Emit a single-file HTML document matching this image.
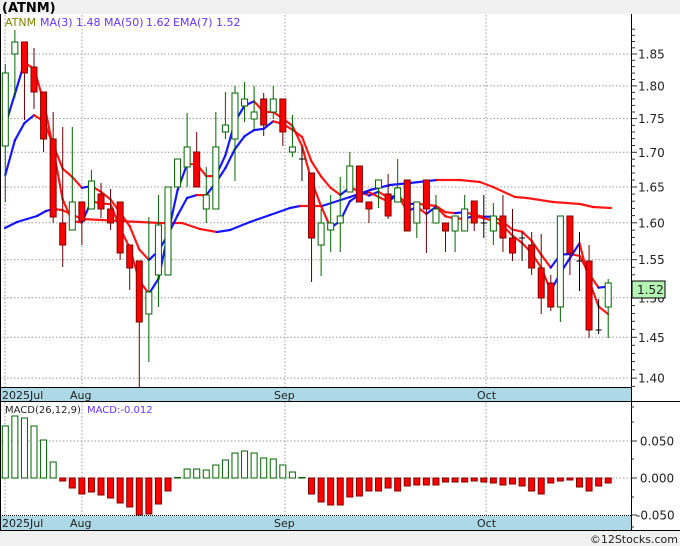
<!DOCTYPE html>
<html><head><meta charset="utf-8"><style>
html,body{margin:0;padding:0;background:#f0f0f0;width:680px;height:546px;overflow:hidden}
svg{display:block}
text{font-family:"DejaVu Sans","Liberation Sans",sans-serif}
</style></head><body>
<svg id="s" width="680" height="546" xmlns="http://www.w3.org/2000/svg">
<rect x="0" y="0" width="680" height="546" fill="#f0f0f0"/>
<text x="2" y="12" font-size="13" font-weight="bold" fill="#000">(ATNM)</text>
<rect x="0" y="14" width="680" height="516" fill="#fff"/>
<g id="g"></g>
</svg>
<script>
var g=document.getElementById('g'),o='';
function Y(p){return 769.2-1162.5*Math.log(p);}
function P(y){return Math.exp((769.2-y)/1162.5);}
var X0=5.3,DX=9.57;function X(i){return X0+DX*i;}
// grid
var lv=[1.85,1.80,1.75,1.70,1.65,1.60,1.55,1.50,1.45,1.40];
lv.forEach(function(p){var y=Y(p).toFixed(1);o+='<line x1="0" x2="631" y1="'+y+'" y2="'+y+'" stroke="#999" stroke-dasharray="1.5,2"/>';});
[5,82,285,486].forEach(function(x){o+='<line x1="'+x+'" x2="'+x+'" y1="15" y2="388" stroke="#999" stroke-dasharray="1.5,2"/><line x1="'+x+'" x2="'+x+'" y1="402" y2="515" stroke="#999" stroke-dasharray="1.5,2"/>';});
[441,478].forEach(function(y){o+='<line x1="0" x2="631" y1="'+y+'" y2="'+y+'" stroke="#999" stroke-dasharray="1.5,2"/>';});
// MA50
var m50=[[5,228],[17,222],[27,219],[37,216],[46,211],[53,209],[62,210],[82,219],[120,221],[160,223],[182,223],[200,229],[217,232],[230,230],[250,222],[270,215],[290,208],[300,206],[322,206],[350,197],[370,190],[390,185],[410,183],[437,180],[460,180],[480,182],[493,187],[515,197],[527,198],[553,202],[580,204],[593,207],[611,208]];
function seg(pts){for(var i=1;i<pts.length;i++){var a=pts[i-1],b=pts[i];var c=b[1]<a[1]-0.01?'#0000ff':'#ff0000';o+='<line x1="'+a[0]+'" y1="'+a[1]+'" x2="'+b[0]+'" y2="'+b[1]+'" stroke="'+c+'" stroke-width="2.2" stroke-linecap="round" opacity="0.9"/>';}}
seg(m50);
// candles: [open,close,high,low] in pixel y
var C=[
['g',146,73,64,202],['g',54,42,30,98],['r',42,73,42,120],['r',67,92,48,109],['r',92,139,92,152],['r',139,217,112,223],['r',223,245,127,267],['g',230,202,127,230],['r',202,221,202,245],['g',209,181,170,209],['r',194,209,183,218],['r',209,223,189,230],['r',202,253,202,260],['r',245,268,245,290],['r',261,322,261,387],['g',314,292,217,362],
['g',275,225,195,307],['g',275,187,187,275],['g',187,159,159,187],['g',167,147,113,187],['r',152,187,132,187],['g',209,195,167,223],['g',209,147,112,209],['g',132,125,92,139],['g',139,93,86,181],['g',106,99,82,122],['g',119,112,86,129],['r',99,125,93,136],['g',112,99,86,119],['r',99,132,99,146],['g',152,147,115,157],['d',159,159,147,181],
['r',173,238,173,282],['g',245,223,209,276],['g',230,223,195,252],['g',223,216,177,252],['g',192,166,152,192],['r',166,202,166,202],['r',202,209,202,223],['g',188,180,180,208],['r',194,216,174,219],['g',202,188,159,202],['r',180,231,180,231],['g',223,202,202,238],['r',180,209,180,253],['g',223,209,195,223],['r',223,231,223,252],['g',231,216,216,252],
['g',231,209,195,231],['r',201,223,201,231],['d',223,223,195,238],['g',231,216,203,245],['r',216,238,195,252],['r',238,253,209,261],['d',238,238,232,261],['r',245,268,232,275],['r',268,298,234,314],['r',283,307,275,311],['g',307,216,216,322],['r',216,253,216,275],['d',261,261,232,291],['r',261,330,245,338],['d',330,330,299,334],['g',307,283,279,338]];
var closes=C.map(function(c){return P(c[2]);});
// MA3 & EMA7
var ma=[],em=[];
for(var i=0;i<C.length;i++){
 if(i==0)ma.push([X(0),125]);else if(i==1)ma.push([X(1),94]);
 else ma.push([X(i),Y((closes[i]+closes[i-1]+closes[i-2])/3)]);
}
var e=P(175);em.push([X(0),175]);
for(var i=1;i<C.length;i++){e=e+(closes[i]-e)*0.25;em.push([X(i),Y(e)]);}
function r1(a){return a.map(function(p){return [+p[0].toFixed(1),+p[1].toFixed(1)];});}
seg(r1(em));seg(r1(ma));
C.forEach(function(c,i){var x=X(i),t=c[0];
 var top=Math.min(c[1],c[2]),bot=Math.max(c[1],c[2]);
 if(t=='d'){o+='<line x1="'+x+'" x2="'+x+'" y1="'+c[3]+'" y2="'+c[4]+'" stroke="#000"/><line x1="'+(x-3)+'" x2="'+(x+3)+'" y1="'+c[1]+'" y2="'+c[1]+'" stroke="#000"/>';return;}
 var wc=t=='g'?'#006400':'#660000';
 o+='<line x1="'+x+'" x2="'+x+'" y1="'+c[3]+'" y2="'+c[4]+'" stroke="'+wc+'"/>';
 o+='<rect x="'+(x-3)+'" y="'+top+'" width="6" height="'+Math.max(bot-top,1)+'" fill="'+(t=='g'?'#fff':'#ff0000')+'" stroke="'+(t=='g'?'#006400':'#800000')+'"/>';
});
// legend
o+='<text font-size="11" y="26"><tspan x="5" fill="#808000">ATNM</tspan><tspan x="40" fill="#6633ff">MA(3)</tspan><tspan x="76" fill="#6633ff">1.48</tspan><tspan x="104" fill="#6633ff">MA(50)</tspan><tspan x="146" fill="#6633ff">1.62</tspan><tspan x="173" fill="#6633ff">EMA(7)</tspan><tspan x="216" fill="#6633ff">1.52</tspan></text>';
// axis
o+='<line x1="631.5" x2="631.5" y1="14" y2="530" stroke="#000"/>';
for(var p=1.38;p<=1.90;p+=0.01){var y=Y(p);if(y<16||y>387)continue;var maj=Math.abs(Math.round(p*100)%5)==0;o+='<line x1="631" x2="'+(maj?637:635)+'" y1="'+y.toFixed(1)+'" y2="'+y.toFixed(1)+'" stroke="#333"/>';}
lv.forEach(function(p){o+='<text x="638" y="'+(Y(p)+4.5).toFixed(1)+'" font-size="12" fill="#222">'+p.toFixed(2)+'</text>';});
o+='<rect x="632" y="281" width="33" height="17" fill="#b3f5b3" stroke="#000"/><text x="637" y="294" font-size="12" fill="#222">1.52</text>';
// date bands
function band(y){o+='<rect x="0" y="'+y+'" width="631" height="14" fill="#add8e6"/><text font-size="11" fill="#222" y="'+(y+11)+'"><tspan x="2">2025Jul</tspan><tspan x="70">Aug</tspan><tspan x="274">Sep</tspan><tspan x="477">Oct</tspan></text>';}
band(388);o+='<line x1="0" x2="631" y1="387.5" y2="387.5" stroke="#000"/><line x1="0" x2="680" y1="401.5" y2="401.5" stroke="#000"/>';
// MACD
var M=[52,62,60,52,38,16,-3,-10,-16,-14,-17,-20,-25,-29,-37,-36,-26,-13,0.5,9,9,8,13,18,25,27,25,20,19,13,6,0.5,-16,-24,-27,-27,-19,-18,-13,-13,-10,-13,-8,-7,-7,-7,-4,-4,-4,-3,-4,-5,-7,-6,-8,-13,-16,-5,-3,-2,-9,-13,-8,-5];
M.forEach(function(v,i){var x=X(i)-3;if(v>=0){o+='<rect x="'+x+'" y="'+(478-v)+'" width="6" height="'+v+'" fill="#fff" stroke="#006400"/>';}else{o+='<rect x="'+x+'" y="478" width="6" height="'+(-v)+'" fill="#ff0000" stroke="#800000"/>';}});
o+='<text font-size="10" y="413"><tspan x="5" fill="#222">MACD(26,12,9)</tspan><tspan x="87" fill="#6633ff">MACD:-0.012</tspan></text>';
[[441,' 0.050'],[478,' 0.000'],[515,'-0.050']].forEach(function(a){o+='<line x1="631" x2="637" y1="'+a[0]+'" y2="'+a[0]+'" stroke="#333"/><text x="636" y="'+(a[0]+4.5)+'" font-size="12" fill="#222" xml:space="preserve">'+a[1]+'</text>';});
[407,422,459,497,527].forEach(function(y){o+='<line x1="631" x2="634" y1="'+y+'" y2="'+y+'" stroke="#333"/>';});
band(516);o+='<line x1="0" x2="631" y1="515.5" y2="515.5" stroke="#000" stroke-dasharray="1,1"/><line x1="0" x2="680" y1="530.5" y2="530.5" stroke="#000"/><line x1="0.5" x2="0.5" y1="14" y2="530" stroke="#000"/>';
o+='<text x="678" y="543" text-anchor="end" font-size="11" fill="#222">©12Stocks.com</text>';
g.innerHTML=o;
</script>
</body></html>
